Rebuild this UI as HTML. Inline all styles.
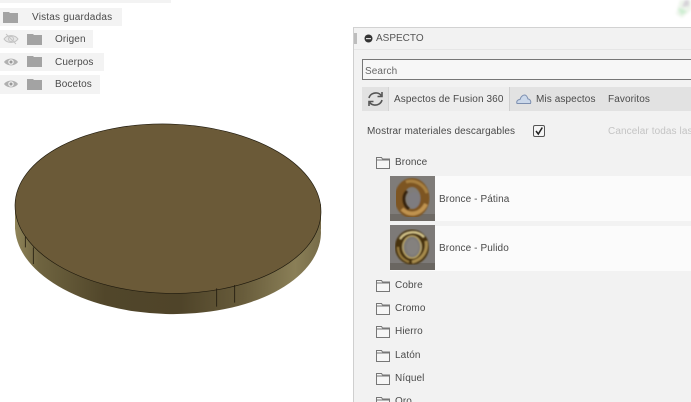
<!DOCTYPE html>
<html lang="es">
<head>
<meta charset="utf-8">
<style>
html,body{margin:0;padding:0;background:#fff;}
#p{position:relative;width:691px;height:402px;overflow:hidden;background:#fff;font-family:"Liberation Sans",sans-serif;font-size:10px;color:#444;filter:blur(.3px);}
.a{position:absolute;white-space:nowrap;}
.chip{position:absolute;background:#f3f3f3;}
.t{position:absolute;white-space:nowrap;line-height:12px;font-size:10px;color:#4a4a4a;letter-spacing:.1px;}
svg{position:absolute;display:block;overflow:visible;}
</style>
</head>
<body>
<div id="p">

<!-- Browser tree -->
<div class="chip" style="left:0;top:0;width:171px;height:3px"></div>
<div class="chip" style="left:0;top:8px;width:122px;height:18px"></div>
<div class="chip" style="left:0;top:30px;width:93px;height:18px"></div>
<div class="chip" style="left:0;top:53px;width:104px;height:18px"></div>
<div class="chip" style="left:0;top:75px;width:100px;height:19px"></div>

<svg style="left:3px;top:11px" width="15" height="12" viewBox="0 0 15 12"><path d="M0 1h6l1 1h8v10H0z" fill="#a3a3a3"/></svg>
<div class="t" style="left:32px;top:11.500px;letter-spacing:.2px">Vistas guardadas</div>

<svg style="left:3px;top:33px" width="16" height="12" viewBox="0 0 16 12"><path d="M1 6C4 1.500 12 1.500 15 6C12 10.500 4 10.500 1 6Z" fill="#e6e6e6" stroke="#c0c0c0"/><circle cx="8" cy="6" r="2.500" fill="none" stroke="#c4c4c4"/><path d="M3 1L13 11" stroke="#c4c4c4"/></svg>
<svg style="left:27px;top:33.500px" width="15" height="11" viewBox="0 0 15 11"><path d="M0 0h6l1 1h8v10H0z" fill="#a3a3a3"/></svg>
<div class="t" style="left:55px;top:33.500px">Origen</div>

<svg style="left:3px;top:56px" width="16" height="12" viewBox="0 0 16 12"><path d="M1 6C4 1.500 12 1.500 15 6C12 10.500 4 10.500 1 6Z" fill="#b0b0b0"/><circle cx="8" cy="6" r="2.800" fill="#eee"/><circle cx="8" cy="6" r="1.500" fill="#999"/></svg>
<svg style="left:27px;top:56px" width="15" height="11" viewBox="0 0 15 11"><path d="M0 0h6l1 1h8v10H0z" fill="#a3a3a3"/></svg>
<div class="t" style="left:55px;top:56.500px">Cuerpos</div>

<svg style="left:3px;top:78px" width="16" height="12" viewBox="0 0 16 12"><path d="M1 6C4 1.500 12 1.500 15 6C12 10.500 4 10.500 1 6Z" fill="#b0b0b0"/><circle cx="8" cy="6" r="2.800" fill="#eee"/><circle cx="8" cy="6" r="1.500" fill="#999"/></svg>
<svg style="left:27px;top:78.500px" width="15" height="11" viewBox="0 0 15 11"><path d="M0 0h6l1 1h8v10H0z" fill="#a3a3a3"/></svg>
<div class="t" style="left:55px;top:79px">Bocetos</div>

<!-- Disc -->
<svg style="left:0;top:0" width="340" height="330" viewBox="0 0 340 330">
<defs>
<linearGradient id="side" gradientUnits="userSpaceOnUse" x1="46" y1="0" x2="962" y2="0">
<stop offset="0" stop-color="#8f8459"/>
<stop offset=".08" stop-color="#6f6440"/>
<stop offset=".3" stop-color="#51462a"/>
<stop offset=".55" stop-color="#4f4429"/>
<stop offset=".75" stop-color="#685c3b"/>
<stop offset=".92" stop-color="#8a7f57"/>
<stop offset="1" stop-color="#776c49"/>
</linearGradient>
</defs>
<g transform="translate(0,110) scale(.33333)">
<ellipse cx="504" cy="358" rx="459" ry="254" transform="rotate(1.6 504 358)" fill="url(#side)"/>
<rect x="45" y="283" width="918" height="75" fill="url(#side)"/>
<ellipse cx="504" cy="296" rx="459" ry="254" transform="rotate(1.600 504 296)" fill="#6b5a38" stroke="#1f1a0e" stroke-width="2"/>
<path d="M76 380V412M100 412V462M650 535V590M704 525V578" stroke="#221c0f" stroke-width="2.500" fill="none"/>
</g>
</svg>

<!-- Top-right green smudge -->
<svg style="left:672px;top:0" width="19" height="20" viewBox="0 0 19 20"><defs><filter id="sm" x="-30%" y="-30%" width="160%" height="160%"><feGaussianBlur stdDeviation="1.300"/></filter></defs><g filter="url(#sm)"><path d="M4 14L8 0H19V10L10 18Z" fill="#eef5ec"/><path d="M10 7L13 0H17V6Z" fill="#d6d2d8"/><path d="M6 8L9 15L15 12L11 9Z" fill="#cdeed2"/></g></svg>

<!-- Panel -->
<div class="a" style="left:353px;top:27px;width:338px;height:375px;background:#f2f2f2;border-top:1px solid #d2d2d2;border-left:1px solid #cfcfcf;box-sizing:border-box"></div>
<div class="a" style="left:354px;top:49px;width:337px;height:1px;background:#e6e6e6"></div>
<div class="a" style="left:354px;top:33px;width:3px;height:11px;background:#bdbdbd"></div>
<svg style="left:364px;top:34px" width="9" height="9" viewBox="0 0 9 9"><circle cx="4.500" cy="4.500" r="4" fill="#333"/><rect x="2" y="4" width="5" height="1.200" fill="#ddd"/></svg>
<div class="t" style="left:376px;top:33px;color:#555;letter-spacing:0">ASPECTO</div>

<div class="a" style="left:362px;top:59px;width:329px;height:21px;background:#f7f7f7;border:1px solid #777;border-right:0;box-sizing:border-box"></div>
<div class="t" style="left:365px;top:65.500px;color:#666">Search</div>

<div class="a" style="left:362px;top:87px;width:329px;height:24px;background:#e2e2e2"></div>
<div class="a" style="left:388px;top:87px;width:122px;height:24px;background:#ededed;border-right:1px solid #cfcfcf;border-left:1px solid #d4d4d4;box-sizing:border-box"></div>
<svg style="left:367px;top:91px" width="17" height="16" viewBox="0 0 17 16"><path d="M2 7C3 3 7 1.500 10 2C12 2.300 13.500 3.500 14 4.500M15 1V5.500H10.500M15 9C14 13 10 14.500 7 14C5 13.700 3.500 12.500 3 11.500M2 15V10.500H6.500" fill="none" stroke="#555" stroke-width="1.600"/></svg>
<div class="t" style="left:394px;top:94px">Aspectos de Fusion 360</div>
<svg style="left:516px;top:93px" width="16" height="12" viewBox="0 0 16 12"><path d="M1 10.500C0 8 2 6.500 4 6.500C5 3 8 1 10 2.500C11.500 3.500 11.500 5 12 6C14 6 15.500 8.500 14.500 10.500Z" fill="#cbd8ea" stroke="#7d8fb0"/></svg>
<div class="t" style="left:536px;top:94px">Mis aspectos</div>
<div class="t" style="left:608px;top:94px">Favoritos</div>

<div class="t" style="left:367px;top:125.500px">Mostrar materiales descargables</div>
<div class="a" style="left:533px;top:125px;width:12px;height:12px;background:#f5f5f5;border:1px solid #555;border-radius:2px;box-sizing:border-box"></div>
<svg style="left:534px;top:126px" width="10" height="10" viewBox="0 0 10 10"><path d="M2 5L4.300 8L8.300 1.500" fill="none" stroke="#222" stroke-width="1.500"/></svg>
<div class="t" style="left:608px;top:125.500px;color:#c4c4c4">Cancelar todas las</div>

<!-- Bronce -->
<svg style="left:376px;top:157px" width="14" height="12" viewBox="0 0 14 12"><path d="M.5 11.500V.5H5.500L6.500 2H13.500V11.500ZM.5 3H13.500" fill="#f6f6f6" stroke="#777"/></svg>
<div class="t" style="left:395px;top:157px">Bronce</div>

<div class="a" style="left:390px;top:176px;width:301px;height:45px;background:#fbfbfb"></div>
<div class="a" style="left:390px;top:226px;width:301px;height:45px;background:#fbfbfb"></div>

<svg style="left:390px;top:176px" width="45" height="45" viewBox="0 0 45 45">
<defs><filter id="b1" x="-10%" y="-10%" width="120%" height="120%"><feGaussianBlur stdDeviation=".8"/></filter></defs>
<rect width="45" height="45" fill="#7f7c79"/><rect y="38" width="45" height="7" fill="#6e6a65"/>
<g filter="url(#b1)">
<ellipse cx="22" cy="22" rx="13" ry="15.500" fill="none" stroke="#7d5522" stroke-width="9"/>
<path d="M16 6C24 3 34 8 37 17" fill="none" stroke="#a8803f" stroke-width="3"/>
<path d="M12 33C20 41 31 38 36 28" fill="none" stroke="#c0934f" stroke-width="4"/>
<path d="M17 15C12 20 13 29 19 33" fill="none" stroke="#35220c" stroke-width="3"/>
<ellipse cx="24" cy="24" rx="6" ry="8" fill="#7e7c80"/>
</g>
</svg>
<svg style="left:390px;top:225px" width="45" height="45" viewBox="0 0 45 45">
<rect width="45" height="45" fill="#7d7a78"/><rect y="38" width="45" height="7" fill="#6a6661"/>
<g filter="url(#b1)">
<ellipse cx="22" cy="22" rx="13.500" ry="14" fill="none" stroke="#46320f" stroke-width="7"/>
<path d="M10 14C15 6 27 5 34 12" fill="none" stroke="#d9c98e" stroke-width="2"/>
<path d="M36 16C38 26 32 35 22 37" fill="none" stroke="#a88c4d" stroke-width="3"/>
<path d="M8 22C8 30 13 35 19 37" fill="none" stroke="#9a7d3e" stroke-width="2"/>
<ellipse cx="22" cy="22" rx="9" ry="11" fill="none" stroke="#bda663" stroke-width="1.300"/>
<ellipse cx="22.500" cy="22" rx="6" ry="8" fill="#84817e"/>
</g>
</svg>
<div class="t" style="left:439px;top:193.500px">Bronce - Pátina</div>
<div class="t" style="left:439px;top:243px">Bronce - Pulido</div>

<!-- Folder list -->
<svg style="left:376px;top:280px" width="14" height="12" viewBox="0 0 14 12"><path d="M.5 11.500V.5H5.500L6.500 2H13.500V11.500ZM.5 3H13.500" fill="#f6f6f6" stroke="#777"/></svg>
<div class="t" style="left:395px;top:280px">Cobre</div>
<svg style="left:376px;top:303px" width="14" height="12" viewBox="0 0 14 12"><path d="M.5 11.500V.5H5.500L6.500 2H13.500V11.500ZM.5 3H13.500" fill="#f6f6f6" stroke="#777"/></svg>
<div class="t" style="left:395px;top:303px">Cromo</div>
<svg style="left:376px;top:326px" width="14" height="12" viewBox="0 0 14 12"><path d="M.5 11.500V.5H5.500L6.500 2H13.500V11.500ZM.5 3H13.500" fill="#f6f6f6" stroke="#777"/></svg>
<div class="t" style="left:395px;top:326px">Hierro</div>
<svg style="left:376px;top:350px" width="14" height="12" viewBox="0 0 14 12"><path d="M.5 11.500V.5H5.500L6.500 2H13.500V11.500ZM.5 3H13.500" fill="#f6f6f6" stroke="#777"/></svg>
<div class="t" style="left:395px;top:350px">Latón</div>
<svg style="left:376px;top:373px" width="14" height="12" viewBox="0 0 14 12"><path d="M.5 11.500V.5H5.500L6.500 2H13.500V11.500ZM.5 3H13.500" fill="#f6f6f6" stroke="#777"/></svg>
<div class="t" style="left:395px;top:373px">Níquel</div>
<svg style="left:376px;top:397px" width="14" height="12" viewBox="0 0 14 12"><path d="M.5 11.500V.5H5.500L6.500 2H13.500V11.500ZM.5 3H13.500" fill="#f6f6f6" stroke="#777"/></svg>
<div class="t" style="left:395px;top:396px">Oro</div>

</div>
</body>
</html>
